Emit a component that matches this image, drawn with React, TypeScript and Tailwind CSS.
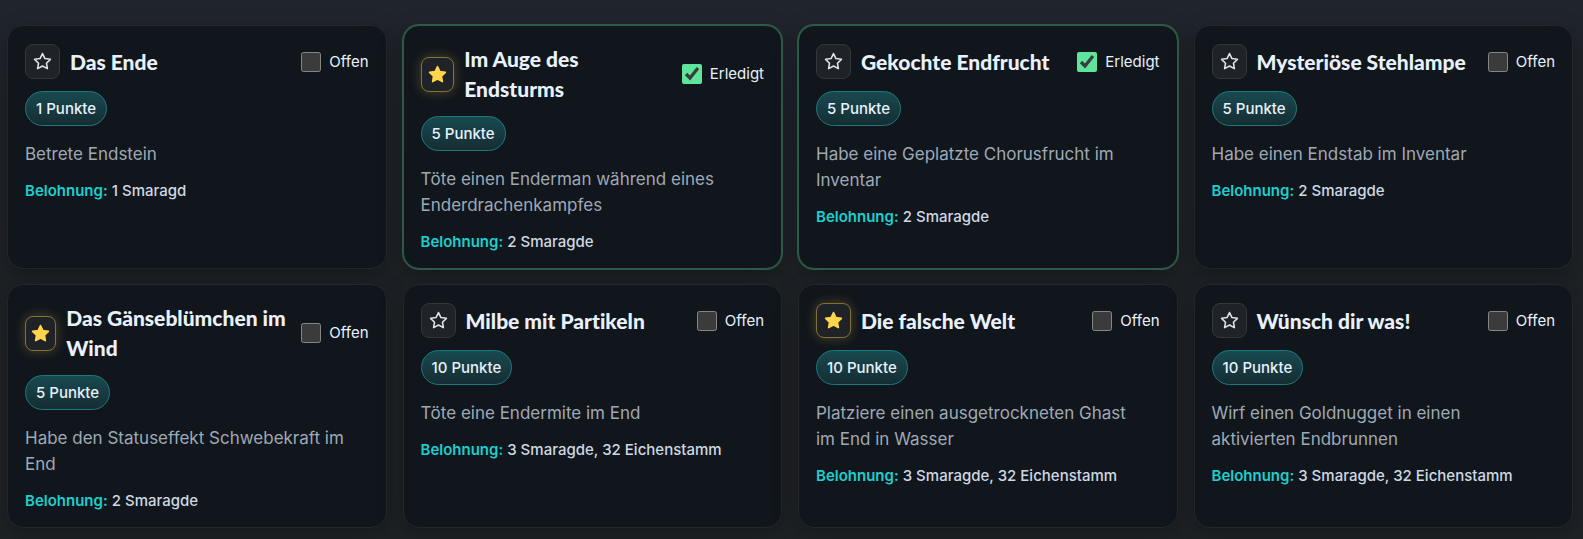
import { useState } from "react";

type Quest = {
  title: string;
  points: number;
  text: string;
  reward: string;
  starred?: boolean;
  done?: boolean;
};

const QUESTS: Quest[] = [
  { title: "Das Ende", points: 1, text: "Betrete Endstein", reward: "1 Smaragd" },
  {
    title: "Im Auge des Endsturms",
    points: 5,
    text: "Töte einen Enderman während eines Enderdrachenkampfes",
    reward: "2 Smaragde",
    starred: true,
    done: true,
  },
  {
    title: "Gekochte Endfrucht",
    points: 5,
    text: "Habe eine Geplatzte Chorusfrucht im Inventar",
    reward: "2 Smaragde",
    done: true,
  },
  { title: "Mysteriöse Stehlampe", points: 5, text: "Habe einen Endstab im Inventar", reward: "2 Smaragde" },
  {
    title: "Das Gänseblümchen im Wind",
    points: 5,
    text: "Habe den Statuseffekt Schwebekraft im End",
    reward: "2 Smaragde",
    starred: true,
  },
  { title: "Milbe mit Partikeln", points: 10, text: "Töte eine Endermite im End", reward: "3 Smaragde, 32 Eichenstamm" },
  {
    title: "Die falsche Welt",
    points: 10,
    text: "Platziere einen ausgetrockneten Ghast im End in Wasser",
    reward: "3 Smaragde, 32 Eichenstamm",
    starred: true,
  },
  {
    title: "Wünsch dir was!",
    points: 10,
    text: "Wirf einen Goldnugget in einen aktivierten Endbrunnen",
    reward: "3 Smaragde, 32 Eichenstamm",
  },
];

function StarIcon({ filled }: { filled: boolean }) {
  return (
    <svg
      viewBox="0 0 24 24"
      className="size-[19px] shrink-0"
      fill={filled ? "currentColor" : "none"}
      stroke="currentColor"
      strokeWidth="2"
      strokeLinejoin="round"
      aria-hidden="true"
    >
      <path d="M12 2l3.09 6.26L22 9.27l-5 4.87 1.18 6.88L12 17.77l-6.18 3.25L7 14.14 2 9.27l6.91-1.01z" />
    </svg>
  );
}

function QuestCard({ quest }: { quest: Quest }) {
  const [starred, setStarred] = useState(Boolean(quest.starred));
  const [done, setDone] = useState(Boolean(quest.done));
  return (
    <article
      className={
        "rounded-2xl border bg-[#11161c] px-[17px] pt-[18px] pb-[14px] " +
        (done
          ? "border-[#2d5a46] shadow-[0_0_0_1px_#2d5a46,0_8px_24px_rgba(0,0,0,0.25)]"
          : "border-[#23272c] shadow-[0_8px_24px_rgba(0,0,0,0.25)]")
      }
    >
      <header className="flex items-center justify-between gap-3">
        <div className="flex items-center gap-[10px]">
          <button
            type="button"
            aria-label="Favorit"
            aria-pressed={starred}
            onClick={() => setStarred(!starred)}
            className={
              "flex h-[35px] w-[35px] shrink-[0.6] items-center justify-center rounded-lg border bg-[#1f2327] " +
              (starred
                ? "border-[#84703a] text-[#ffd54a] shadow-[0_0_12px_rgba(255,213,74,0.25)]"
                : "border-[#33373b] text-[#dfe3e8]")
            }
          >
            <StarIcon filled={starred} />
          </button>
          <h3 className="font-['Lato',sans-serif] text-[21px] leading-[30px] font-black text-[#e8f1fc] [font-variant-ligatures:none]">
            {quest.title}
          </h3>
        </div>
        <label className="flex shrink-0 items-center gap-2 text-[15px] leading-6 text-[#e8f1fc]">
          <input
            type="checkbox"
            checked={done}
            onChange={() => setDone(!done)}
            className="size-5 accent-[#5ee59b] scheme-dark"
          />
          {done ? "Erledigt" : "Offen"}
        </label>
      </header>
      <div className="mt-3 flex">
        <span className="rounded-full border border-[#1b7a7d] bg-linear-to-b from-[#174a50] to-[#152d33] px-[10px] py-[5px] text-[15px] leading-[23px] font-medium text-[#e8f1fc]">
          {quest.points} Punkte
        </span>
      </div>
      <p className="mt-[15px] pr-4 text-[17px] leading-[26px] text-[#9fa9b5]">{quest.text}</p>
      <p className="mt-3 text-[15px] leading-6 font-medium text-[#cfd8e3]">
        <strong className="font-semibold text-[#1ccfcf]">Belohnung:</strong> {quest.reward}
      </p>
    </article>
  );
}

export default function App() {
  return (
    <main className="min-h-screen bg-linear-to-b from-[#20242c] to-[#1f2226] to-50% pt-[25px] pr-[10px] pb-[11px] pl-[7px] font-['Inter',sans-serif]">
      <section className="grid grid-cols-1 gap-x-4 gap-y-[15px] sm:grid-cols-2 lg:grid-cols-4">
        {QUESTS.map((quest) => (
          <QuestCard key={quest.title} quest={quest} />
        ))}
      </section>
    </main>
  );
}
